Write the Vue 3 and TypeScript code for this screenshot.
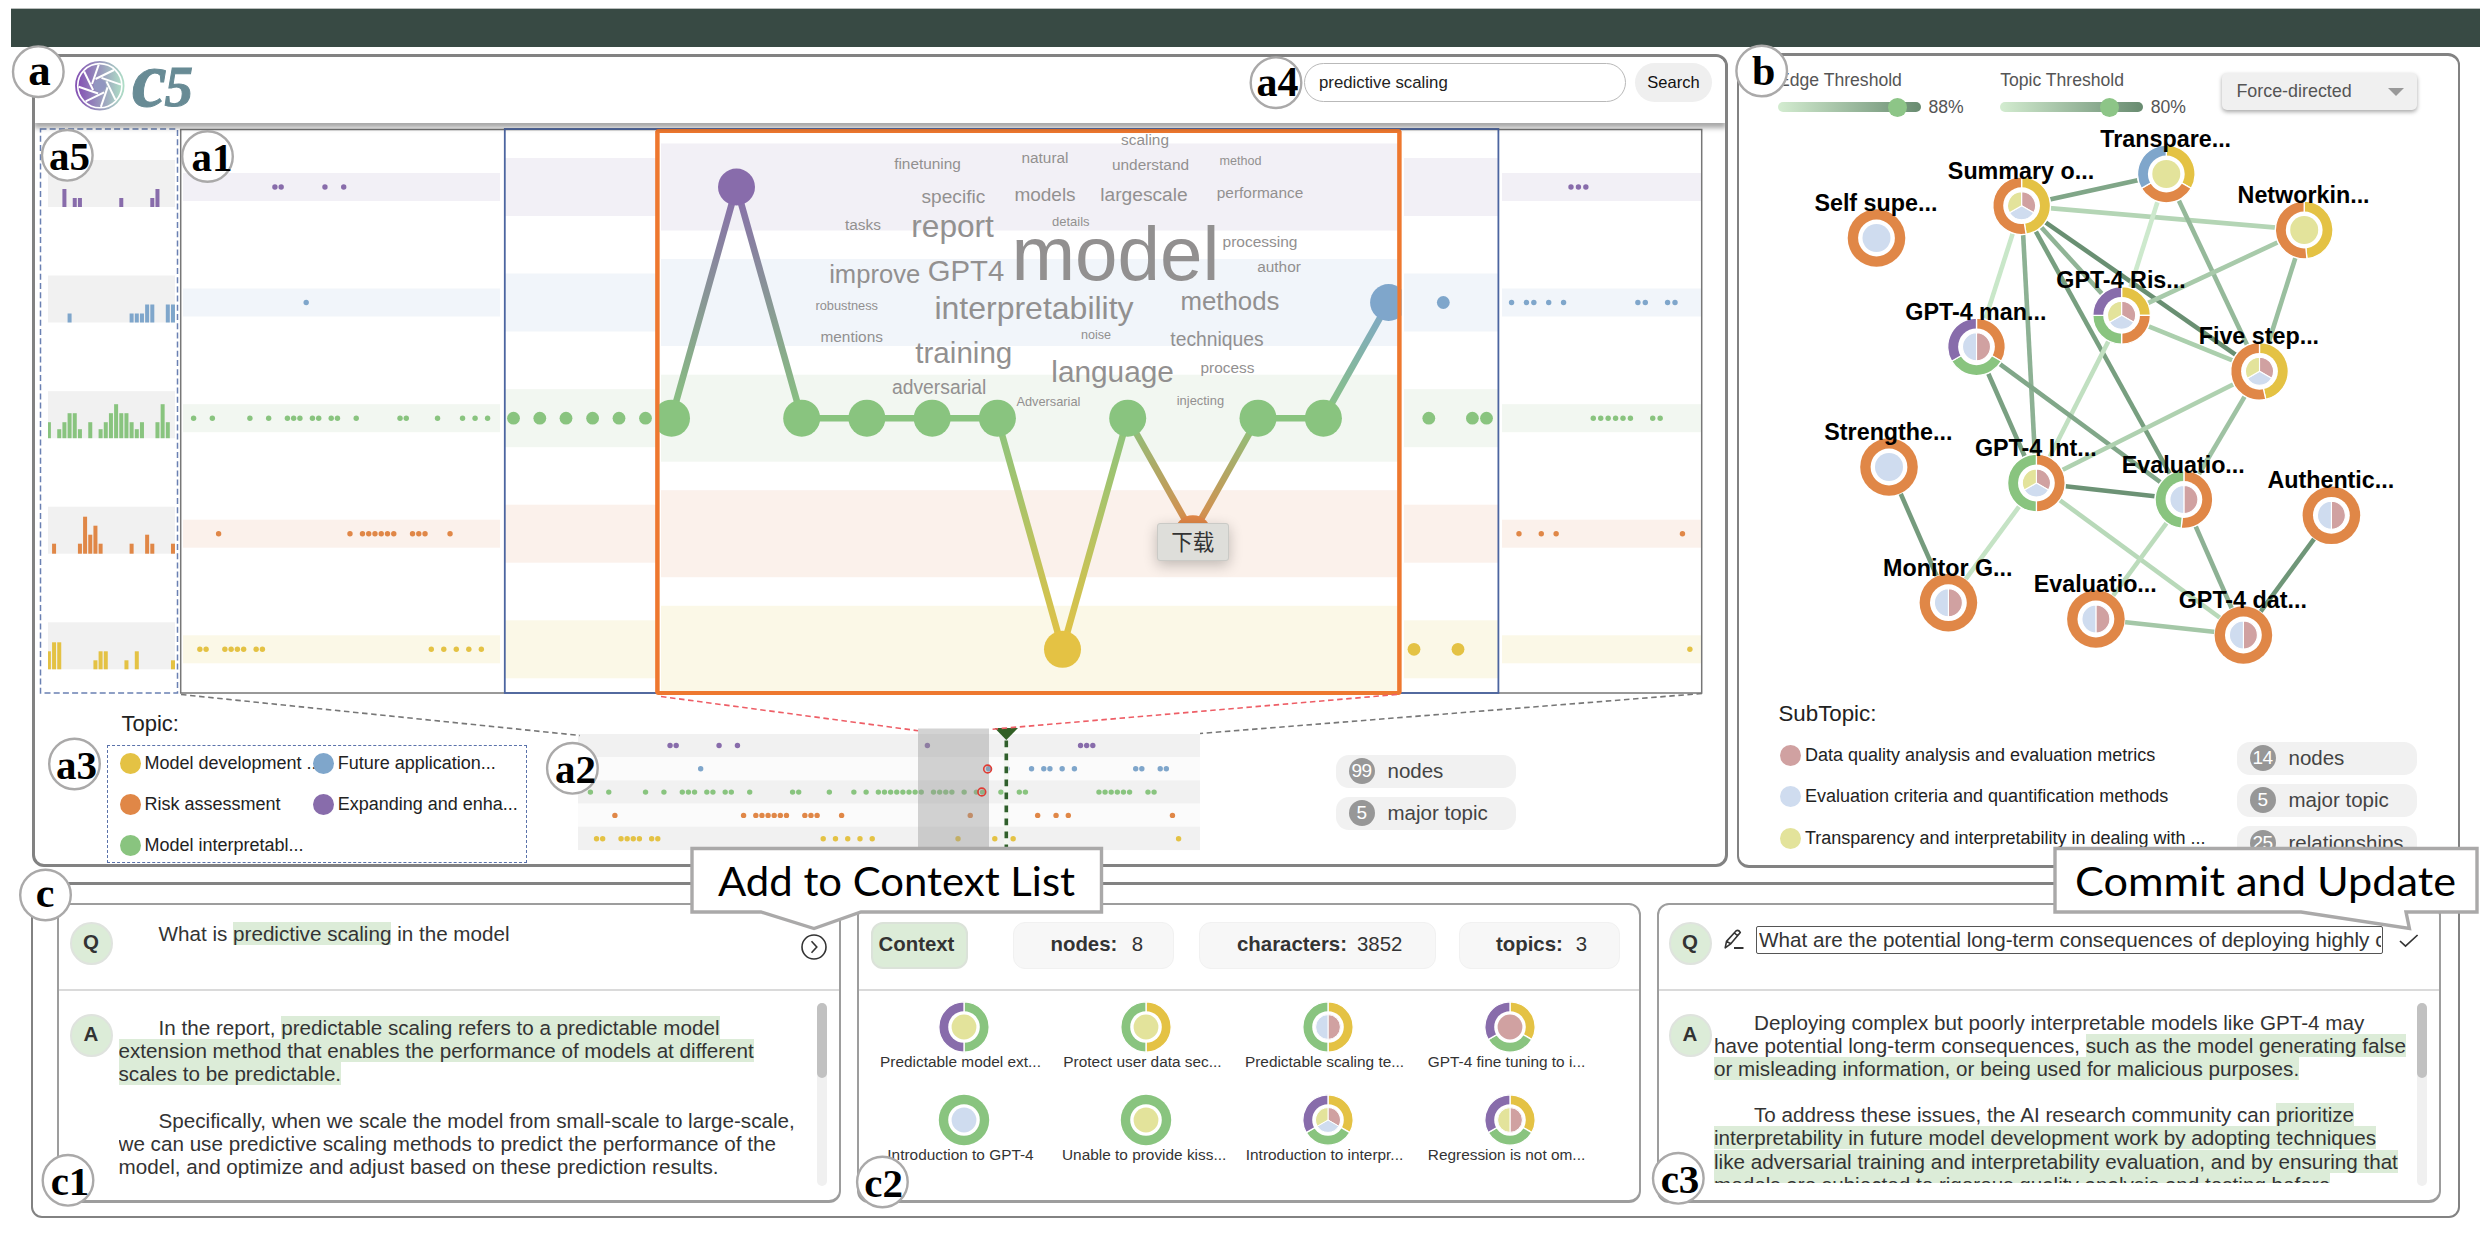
<script setup lang="ts">
type Key = 'P' | 'B' | 'G' | 'O' | 'Y'
const color: Record<Key, string> = { P: '#886cab', B: '#7fa6cb', G: '#89c47f', O: '#e08747', Y: '#e4c244' }
const tint: Record<Key, string> = { P: '#f2f0f6', B: '#f1f5fa', G: '#f2f7f1', O: '#fbf1eb', Y: '#fbf8e7' }
const sub: Record<string, string> = { r: '#d0a1a1', b: '#cfdcef', y: '#e3e39b' }

interface Row { key: Key; y: number; nodes: number[]; bars: [number, number][] }
const rows: Row[] = [
  { key: 'P', y: 187, nodes: [13, 14, 21, 24, 55, 80, 81, 82], bars: [[3, 18], [5, 9], [6, 9], [14, 9], [20, 9], [21, 18]] },
  { key: 'B', y: 302.5, nodes: [18, 65, 68, 72, 74, 75, 77, 79, 89, 90, 93, 94], bars: [[4, 9], [16, 9], [17, 9], [18, 9], [19, 18], [20, 18], [23, 18], [24, 18]] },
  { key: 'G', y: 418.2, nodes: [0, 3, 9, 12, 15, 16, 17, 19, 20, 22, 23, 26, 33, 34, 39, 43, 45, 47, 48, 49, 50, 51, 52, 53, 54, 56, 57, 58, 59, 61, 63, 64, 67, 70, 71, 83, 84, 85, 86, 87, 88, 91, 92], bars: [[0, 16], [2, 9], [3, 16], [4, 25], [5, 25], [6, 9], [8, 16], [10, 9], [11, 16], [12, 25], [13, 34], [14, 25], [15, 25], [16, 16], [17, 9], [18, 16], [21, 16], [22, 34], [23, 16]] },
  { key: 'O', y: 533.7, nodes: [4, 25, 27, 28, 29, 30, 31, 32, 35, 36, 37, 41, 62, 73, 76, 78, 95], bars: [[1, 10], [6, 10], [7, 37], [8, 19], [9, 28], [10, 10], [16, 10], [19, 19], [20, 10], [24, 10]] },
  { key: 'Y', y: 649.3, nodes: [1, 2, 5, 6, 7, 8, 10, 11, 38, 40, 42, 44, 46, 60, 66, 69, 96], bars: [[0, 18], [1, 27], [2, 27], [9, 9], [10, 18], [11, 18], [15, 9], [17, 18], [24, 9]] },
]
const segments = [
  { x: 183, w: 317, h: 28 },
  { x: 505, w: 151, h: 58 },
  { x: 661, w: 737, h: 87 },
  { x: 1404, w: 94, h: 58 },
  { x: 1502, w: 199, h: 28 },
]
const smallDots = rows.flatMap(r => r.nodes.filter(n => n < 48 || n > 71)
  .map(n => ({ x: n < 48 ? 193.6 + 6.255 * n : 1571 + 7.43 * (n - 80), y: r.y, c: color[r.key] })))
const yOf = (k: Key) => rows.find(r => r.key === k)!.y
const mediumDots: [number, Key][] = [[513.5, 'G'], [539.8, 'G'], [566, 'G'], [592.6, 'G'], [619, 'G'], [645.5, 'G'], [1443.3, 'B'], [1428.8, 'G'], [1472.4, 'G'], [1486.5, 'G'], [1414, 'Y'], [1458, 'Y']]
const focus: { x: number; k: Key }[] = ([[671.5, 'G'], [736.5, 'P'], [801.7, 'G'], [866.9, 'G'], [932.2, 'G'], [997.4, 'G'], [1062.5, 'Y'], [1127.7, 'G'], [1192.9, 'O'], [1258, 'G'], [1323.4, 'G'], [1388.6, 'B']] as [number, Key][]).map(([x, k]) => ({ x, k }))
const focusLines = focus.slice(1).map((b, i) => ({ a: focus[i], b }))

const words: [string, number, number, number][] = [
  ['scaling', 1145, 144.7, 15.4], ['finetuning', 927.5, 169.3, 15.4], ['natural', 1045, 163, 15.4], ['understand', 1150.5, 170.3, 15.4],
  ['method', 1240.5, 165.3, 12.6], ['specific', 953.4, 202.7, 19.1], ['models', 1045, 201, 19], ['largescale', 1144, 201, 19.2],
  ['performance', 1260, 198.3, 15.4], ['tasks', 863, 229.7, 15.4], ['report', 952.6, 237.3, 31.6], ['details', 1070.8, 226, 13],
  ['model', 1115.5, 279.7, 76.4], ['processing', 1260, 246.7, 15.5], ['author', 1279, 272.3, 15.4], ['improve', 874.7, 282.7, 25.6],
  ['GPT4', 966, 280.7, 29.3], ['robustness', 846.7, 309.7, 12.8], ['interpretability', 1034, 319, 32], ['methods', 1230, 309.7, 25.8],
  ['mentions', 851.7, 342, 15.4], ['noise', 1096, 339.3, 12.6], ['techniques', 1217, 346.3, 19.3], ['training', 963.8, 363, 29.6],
  ['language', 1112.6, 382, 29.8], ['process', 1227.5, 373.3, 15.4], ['adversarial', 939.2, 394, 19.3], ['Adversarial', 1048.4, 406, 12.8], ['injecting', 1200.4, 405.3, 12.9],
]

// Donut segments as [code, fraction] pairs, drawn clockwise from twelve o'clock.
function ring(parts: [string, number][], r: number) {
  let start = 0
  return parts.map(([code, f]) => {
    const a0 = start * 2 * Math.PI
    start += f
    const a1 = start * 2 * Math.PI
    const p = (a: number) => `${(r * Math.sin(a)).toFixed(2)} ${(-r * Math.cos(a)).toFixed(2)}`
    return { code, d: `M0 0L${p(a0)}A${r} ${r} 0 ${f > 0.5 ? 1 : 0} 1 ${p(a1)}Z` }
  })
}
const even = (codes: string): [string, number][] => codes.split('').map(c => [c, 1 / codes.length])

interface GNode { x: number; y: number; label: string; outer: [string, number][]; inner: string }
const nodes: Record<string, GNode> = {
  self: { x: 1876.5, y: 238, label: 'Self supe...', outer: even('O'), inner: 'b' },
  sum: { x: 2021.6, y: 205.7, label: 'Summary o...', outer: [['Y', 0.475], ['O', 0.525]], inner: 'rby' },
  trans: { x: 2166.3, y: 174, label: 'Transpare...', outer: even('YOB'), inner: 'y' },
  net: { x: 2304.2, y: 230, label: 'Networkin...', outer: [['Y', 0.485], ['O', 0.515]], inner: 'y' },
  ris: { x: 2121.6, y: 315.3, label: 'GPT-4 Ris...', outer: even('YOGP'), inner: 'rby' },
  man: { x: 1976.5, y: 346.8, label: 'GPT-4 man...', outer: even('OGP'), inner: 'rb' },
  five: { x: 2259.5, y: 371.3, label: 'Five step...', outer: [['Y', 0.465], ['O', 0.535]], inner: 'rby' },
  str: { x: 1889, y: 467, label: 'Strengthe...', outer: even('O'), inner: 'b' },
  int: { x: 2036.4, y: 483, label: 'GPT-4 Int...', outer: even('OG'), inner: 'rby' },
  eva: { x: 2183.9, y: 499.5, label: 'Evaluatio...', outer: [['O', 0.515], ['G', 0.485]], inner: 'rb' },
  aut: { x: 2331.4, y: 515.3, label: 'Authentic...', outer: even('O'), inner: 'rb' },
  mon: { x: 1948.4, y: 602.7, label: 'Monitor G...', outer: even('O'), inner: 'rb' },
  ev2: { x: 2095.9, y: 619, label: 'Evaluatio...', outer: even('O'), inner: 'rb' },
  dat: { x: 2243.4, y: 635, label: 'GPT-4 dat...', outer: even('O'), inner: 'rb' },
}
const edges: [string, string, string][] = [
  ['sum', 'trans', '#80a688'], ['sum', 'net', '#b4d5b5'], ['sum', 'man', '#c9e7c9'], ['sum', 'int', '#8db194'], ['sum', 'eva', '#789f80'],
  ['sum', 'ris', '#90b496'], ['sum', 'five', '#698f72'], ['trans', 'ris', '#cde9cd'], ['trans', 'five', '#95b99a'], ['net', 'ris', '#a8caaa'],
  ['net', 'five', '#9abf9f'], ['ris', 'five', '#abcfad'], ['ris', 'int', '#c1e0c1'], ['man', 'int', '#7aa082'], ['man', 'eva', '#81a789'],
  ['five', 'int', '#afd1b0'], ['five', 'eva', '#9fc2a3'], ['int', 'eva', '#6c9275'], ['int', 'mon', '#c5e3c5'], ['int', 'dat', '#b8d9b9'],
  ['eva', 'ev2', '#bcdcbc'], ['eva', 'dat', '#8db194'], ['aut', 'dat', '#6f9678'], ['str', 'mon', '#759b7d'], ['ev2', 'dat', '#a4c7a7'],
]

const topics: { k: Key; t: string }[] = [
  { k: 'Y', t: 'Model development ...' }, { k: 'B', t: 'Future application...' }, { k: 'O', t: 'Risk assessment' },
  { k: 'P', t: 'Expanding and enha...' }, { k: 'G', t: 'Model interpretabl...' },
]
const subtopics = [
  { c: 'r', t: 'Data quality analysis and evaluation metrics' },
  { c: 'b', t: 'Evaluation criteria and quantification methods' },
  { c: 'y', t: 'Transparency and interpretability in dealing with ...' },
]
const context: { t: string; outer: string; inner: string }[] = [
  { t: 'Predictable model ext...', outer: 'GP', inner: 'y' }, { t: 'Protect user data sec...', outer: 'YG', inner: 'y' },
  { t: 'Predictable scaling te...', outer: 'YG', inner: 'rb' }, { t: 'GPT-4 fine tuning to i...', outer: 'YGP', inner: 'r' },
  { t: 'Introduction to GPT-4', outer: 'G', inner: 'b' }, { t: 'Unable to provide kiss...', outer: 'G', inner: 'y' },
  { t: 'Introduction to interpr...', outer: 'YGP', inner: 'rby' }, { t: 'Regression is not om...', outer: 'YGP', inner: 'ry' },
]
type Line = { pad?: boolean; t?: string; m?: string }
const answer1: Line[] = [
  { pad: true, t: 'In the report, ', m: 'predictable scaling refers to a predictable model' },
  { m: 'extension method that enables the performance of models at different' },
  { m: 'scales to be predictable.' },
  {},
  { pad: true, t: 'Specifically, when we scale the model from small-scale to large-scale,' },
  { t: 'we can use predictive scaling methods to predict the performance of the' },
  { t: 'model, and optimize and adjust based on these prediction results.' },
]
const answer2: Line[] = [
  { pad: true, t: 'Deploying complex but poorly interpretable models like GPT-4 may' },
  { t: 'have potential long-term consequences, ', m: 'such as the model generating false' },
  { m: 'or misleading information, or being used for malicious purposes.' },
  {},
  { pad: true, t: 'To address these issues, the AI research community can ', m: 'prioritize' },
  { m: 'interpretability in future model development work by adopting techniques' },
  { m: 'like adversarial training and interpretability evaluation, and by ensuring that' },
  { m: 'models are subjected to rigorous quality analysis and testing before' },
]
const question = 'What are the potential long-term consequences of deploying highly complex models?'
// [label, circle x, circle y, text x, baseline y, size]
const badges: [string, number, number, number, number, number][] = [
  ['a', 38.3, 71.7, 39.5, 85, 45], ['a5', 67.3, 155.3, 69.5, 170, 41], ['a1', 207.5, 156.5, 212, 171, 41], ['a3', 74.5, 764, 76.5, 778.7, 41],
  ['a2', 572.4, 768.3, 575.5, 782.7, 41], ['a4', 1276, 82.7, 1277.5, 96, 42], ['b', 1761.7, 71, 1763.7, 85.3, 42], ['c', 45.5, 895, 45, 907.3, 42],
  ['c1', 68, 1180.3, 70, 1194.7, 41], ['c2', 882.4, 1182, 883.7, 1196.7, 41], ['c3', 1678.3, 1178.3, 1680, 1192.7, 41],
]
const blades = [0, 1, 2, 3, 4, 5, 6, 7]
</script>

<template>
  <div class="page">
    <div class="topbar"></div>
    <div class="upper">
      <section class="panel panel-a">
        <header class="head">
          <svg class="logo" width="165" height="66" viewBox="70 57 165 66">
            <defs>
              <linearGradient id="lens" x1="0" x2="1" y1="0" y2="0">
                <stop offset="0" stop-color="#8452b4" /><stop offset="1" stop-color="#aedcc6" />
              </linearGradient>
            </defs>
            <circle cx="99.8" cy="85.7" r="23.8" fill="none" stroke="url(#lens)" stroke-width="1.8" />
            <circle cx="99.8" cy="85.7" r="21.3" fill="url(#lens)" />
            <line v-for="b in blades" :key="b" x1="95.5" y1="79" x2="114" y2="70" :transform="`rotate(${b * 45} 99.8 85.7)`" stroke="#fff" stroke-width="2" />
            <circle cx="99.8" cy="85.7" r="6.2" fill="#9296c0" />
            <text x="132" y="106" class="brand"><tspan font-size="78">c</tspan><tspan x="164.5" font-size="57">5</tspan></text>
          </svg>
          <div class="search">
            <input class="search-input" value="predictive scaling" />
            <button class="search-btn">Search</button>
          </div>
        </header>

        <svg class="timeline" width="1690" height="576" viewBox="35 123 1690 576">
          <defs>
            <clipPath id="focusclip"><rect x="657" y="130" width="744.5" height="563" /></clipPath>
            <clipPath id="barclip"><rect x="48" y="120" width="127" height="580" /></clipPath>
            <linearGradient v-for="(l, i) in focusLines" :id="'fl' + i" :key="i" gradientUnits="userSpaceOnUse" :x1="l.a.x" :x2="l.b.x" :y1="yOf(l.a.k)" :y2="yOf(l.b.k) + 0.01">
              <stop offset="0" :stop-color="color[l.a.k]" /><stop offset="1" :stop-color="color[l.b.k]" />
            </linearGradient>
          </defs>
          <g v-for="r in rows" :key="r.key">
            <rect x="48" :y="r.y - 27" width="127" height="47" fill="#f1f1f1" />
            <g clip-path="url(#barclip)">
              <rect v-for="b in r.bars" :key="b[0]" :x="46.9 + 5.17 * b[0]" :y="r.y + 20 - b[1]" width="4" :height="b[1]" :fill="color[r.key]" />
            </g>
            <rect v-for="s in segments" :key="s.x" :x="s.x" :y="r.y - s.h / 2" :width="s.w" :height="s.h" :fill="tint[r.key]" />
          </g>
          <circle v-for="(d, i) in smallDots" :key="i" :cx="d.x" :cy="d.y" r="2.7" :fill="d.c" />
          <circle v-for="d in mediumDots" :key="d[0]" :cx="d[0]" :cy="yOf(d[1])" r="6.4" :fill="color[d[1]]" />
          <g class="cloud">
            <text v-for="w in words" :key="w[0]" :x="w[1]" :y="w[2]" :font-size="w[3]">{{ w[0] }}</text>
          </g>
          <rect x="40.5" y="129" width="137" height="564" class="dash" />
          <rect x="180.7" y="129.5" width="1521" height="563.5" fill="none" stroke="#777" stroke-width="1.5" />
          <rect x="504.8" y="129" width="993.6" height="564" fill="none" stroke="#4c65a0" stroke-width="1.8" />
          <g clip-path="url(#focusclip)">
            <line v-for="(l, i) in focusLines" :key="i" :x1="l.a.x" :y1="yOf(l.a.k)" :x2="l.b.x" :y2="yOf(l.b.k) + 0.01" :stroke="`url(#fl${i})`" stroke-width="6.6" />
          </g>
          <rect x="657.4" y="131" width="742" height="562" rx="1" fill="none" stroke="#ee782f" stroke-width="4" />
          <g clip-path="url(#focusclip)">
            <circle v-for="f in focus" :key="f.x" :cx="f.x" :cy="yOf(f.k)" r="18.5" :fill="color[f.k]" />
          </g>
          <path d="M657.4 131V693M1399.4 131V693" stroke="#ee782f" stroke-width="4" />
        </svg>

        <div class="overview">
          <div class="topic">
            <div class="title">Topic:</div>
            <div class="legend">
              <div v-for="t in topics" :key="t.t" class="item"><i :style="{ background: color[t.k] }"></i><span>{{ t.t }}</span></div>
            </div>
          </div>
          <svg class="mini" width="640" height="135" viewBox="578 727 640 135">
            <rect v-for="(r, i) in rows" :key="r.key" x="578" :y="734 + 23.2 * i" width="622" height="23.3" :fill="i % 2 ? '#fbfbfb' : '#f1f1f1'" />
            <g v-for="(r, i) in rows" :key="'d' + r.key">
              <circle v-for="n in r.nodes" :key="n" :cx="590.4 + 6.127 * n" :cy="745.5 + 23.3 * i" r="2.7" :fill="color[r.key]" />
            </g>
            <rect x="918" y="728.5" width="71" height="122" fill="rgba(150,150,150,.42)" />
            <circle cx="987.6" cy="769" r="3.9" class="mark" /><circle cx="981.8" cy="792" r="3.9" class="mark" />
            <path d="M1006.3 740V852" stroke="#f4f8f2" stroke-width="5" />
            <path d="M1006.3 740.5V852" stroke="#2f5f2b" stroke-width="3.6" stroke-dasharray="6.8 6.2" />
            <path d="M994.6 728H1018L1006.3 740Z" fill="#315f25" />
          </svg>
          <div class="pills">
            <div class="pill"><b>99</b>nodes</div>
            <div class="pill"><b>5</b>major topic</div>
          </div>
        </div>
      </section>

      <section class="panel panel-b">
        <div class="controls">
          <div class="ctl"><label>Edge Threshold</label><div class="slide"><div class="track"><i class="thumb t88"></i></div>88%</div></div>
          <div class="ctl"><label>Topic Threshold</label><div class="slide"><div class="track"><i class="thumb t80"></i></div>80%</div></div>
          <div class="select">Force-directed<svg width="16" height="8" viewBox="0 0 16 8"><path d="M0 0H16L8 8Z" fill="#999" /></svg></div>
        </div>
        <svg class="graph" width="719" height="566" viewBox="1739 124 719 566">
          <line v-for="e in edges" :key="e[0] + e[1]" :x1="nodes[e[0]].x" :y1="nodes[e[0]].y" :x2="nodes[e[1]].x" :y2="nodes[e[1]].y" :stroke="e[2]" stroke-width="4.6" />
          <g v-for="n in nodes" :key="n.x" :transform="`translate(${n.x} ${n.y})`">
            <circle r="29.5" fill="#fff" />
            <circle v-if="n.outer.length === 1" r="28.8" :fill="color[n.outer[0][0] as Key]" />
            <template v-else><path v-for="s in ring(n.outer, 28.8)" :key="s.code" :d="s.d" :fill="color[s.code as Key]" stroke="#fff" stroke-width="1.3" /></template>
            <circle r="18.4" fill="#fff" />
            <circle v-if="n.inner.length === 1" r="14" :fill="sub[n.inner]" />
            <template v-else><path v-for="s in ring(even(n.inner), 14)" :key="s.code" :d="s.d" :fill="sub[s.code]" stroke="#fff" stroke-width="1.1" /></template>
          </g>
          <text v-for="n in nodes" :key="n.x" :x="n.x - 0.6" :y="n.y - 27" class="nlabel">{{ n.label }}</text>
        </svg>
        <div class="subrow">
          <div class="subs">
            <div class="title">SubTopic:</div>
            <div v-for="s in subtopics" :key="s.c" class="item"><i :style="{ background: sub[s.c] }"></i><span>{{ s.t }}</span></div>
          </div>
          <div class="pills">
            <div class="pill"><b>14</b>nodes</div>
            <div class="pill"><b>5</b>major topic</div>
            <div class="pill"><b>25</b>relationships</div>
          </div>
        </div>
      </section>
    </div>

    <section class="panel-c">
      <article class="card">
        <div class="card-head">
          <div class="avatar">Q</div>
          <div class="q">What is <mark>predictive scaling</mark> in the model</div>
          <svg class="next" width="26" height="26" viewBox="0 0 26 26" fill="none" stroke="#333" stroke-width="1.6"><circle cx="13" cy="13" r="12" /><path d="M10.5 7.2L15.8 13L10.5 18.8" /></svg>
        </div>
        <div class="card-body">
          <div class="avatar">A</div>
          <div class="text">
            <p v-for="(l, i) in answer1" :key="i" :class="{ pad: l.pad }">{{ l.t }}<mark v-if="l.m">{{ l.m }}</mark></p>
          </div>
          <div class="scroll"><i></i></div>
        </div>
      </article>

      <article class="card">
        <div class="card-head stats">
          <div class="chip ctx">Context</div>
          <div class="chip c-nodes"><b>nodes:</b>8</div>
          <div class="chip c-chars"><b>characters:</b>3852</div>
          <div class="chip c-topics"><b>topics:</b>3</div>
        </div>
        <div class="grid">
          <div v-for="c in context" :key="c.t" class="cell">
            <svg width="52" height="52" viewBox="-26 -26 52 52">
              <circle v-if="c.outer.length === 1" r="25.2" :fill="color[c.outer as Key]" />
              <template v-else><path v-for="s in ring(even(c.outer), 25.2)" :key="s.code" :d="s.d" :fill="color[s.code as Key]" stroke="#fff" stroke-width="1.3" /></template>
              <circle r="15.8" fill="#fff" />
              <circle v-if="c.inner.length === 1" r="12.4" :fill="sub[c.inner]" />
              <template v-else><path v-for="s in ring(even(c.inner), 12.4)" :key="s.code" :d="s.d" :fill="sub[s.code]" stroke="#fff" stroke-width="1" /></template>
            </svg>
            <span>{{ c.t }}</span>
          </div>
        </div>
      </article>

      <article class="card third">
        <div class="card-head">
          <div class="avatar">Q</div>
          <svg class="pencil" width="22" height="22" viewBox="0 0 22 22" fill="none" stroke="#333" stroke-width="1.6" stroke-linejoin="round"><path d="M2.2 18.8L3.5 12.4L13.2 1.8Q15.5 .6 17.3 3.4L8 14.6ZM11.4 4L15.2 7.2M3.5 12.4L7.8 14.8" /><path d="M11 19H20.5" stroke-width="2" /></svg>
          <input class="ask" :value="question" />
          <svg class="check" width="20" height="14" viewBox="0 0 20 14" fill="none" stroke="#333" stroke-width="1.7"><path d="M1 7L6.5 12.2L18.6 1" /></svg>
        </div>
        <div class="card-body">
          <div class="avatar">A</div>
          <div class="text">
            <p v-for="(l, i) in answer2" :key="i" :class="{ pad: l.pad }">{{ l.t }}<mark v-if="l.m">{{ l.m }}</mark></p>
          </div>
          <div class="scroll"><i></i></div>
        </div>
      </article>
    </section>

    <div class="menu-tip">下载</div>

    <svg class="notes" width="2486" height="1234" viewBox="0 0 2486 1234">
      <g fill="none" stroke-width="1.6" stroke-dasharray="5.5 3.6">
        <path d="M181 694.5L580 735.5M1702 693.5L1200 733.5" stroke="#777" />
        <path d="M661 696.5L918 730.7M1397 694.5L989 729.5" stroke="#ee5e66" />
      </g>
      <g fill="#fff" stroke="#aaa9a9" stroke-width="3.4">
        <path d="M692 848.5H1101.5V912H861L814 928.5L761 912H692Z" />
        <path d="M2055 848.5H2477V912H2406L2409.4 928.5L2301 912H2055Z" />
      </g>
      <text x="718" y="896" class="callout" textLength="357" lengthAdjust="spacingAndGlyphs">Add to Context List</text>
      <text x="2075" y="896" class="callout" textLength="381" lengthAdjust="spacingAndGlyphs">Commit and Update</text>
      <g v-for="b in badges" :key="b[0]">
        <circle :cx="b[1]" :cy="b[2]" r="25.3" fill="#fff" stroke="#aaa9a9" stroke-width="2.4" />
        <text :x="b[3]" :y="b[4]" :font-size="b[5]" class="badge">{{ b[0] }}</text>
      </g>
    </svg>
  </div>
</template>

<style>
body { margin: 0; background: #fff; }
</style>

<style scoped>
.page { position: relative; width: 2486px; height: 1234px; overflow: hidden; background: #fff; font-family: "Liberation Sans", Arial, sans-serif; color: #333; display: flex; flex-direction: column; }
.page * { box-sizing: border-box; }
i { display: block; }
.topbar { flex: none; margin: 8px 6px 0 11px; height: 39px; background: #384a44; border-top: 1px solid #b9bdbb; }
.upper { display: flex; gap: 9px; margin: 6px 0 0 32px; height: 815px; flex: none; }
.panel { border: 3px solid #828282; border-radius: 12px; background: #fff; }
.panel-a { width: 1696px; height: 813px; margin-top: 1px; }
.panel-b { width: 723px; height: 815px; border-left-width: 2px; border-right-width: 2px; }

.head { height: 66px; display: flex; align-items: flex-start; justify-content: space-between; padding: 0 13px 0 35px; box-shadow: 0 4px 5px 1px rgba(0, 0, 0, .34); clip-path: inset(0 0 -12px 0); background: #fff; border-radius: 9px 9px 0 0; }
.logo { display: block; overflow: visible; }
.brand { font-family: "Liberation Serif", serif; font-style: italic; font-weight: bold; fill: #688b95; stroke: #688b95; stroke-width: 1; }
.search { display: flex; gap: 9px; padding-top: 6px; }
.search-input { width: 322px; height: 39px; border: 1.5px solid #b9b9b9; border-radius: 20px; padding: 0 0 0 14px; font: 16.8px "Liberation Sans", Arial, sans-serif; color: #222; outline: none; background: #fff; }
.search-btn { width: 77px; height: 39px; border: 0; border-radius: 20px; background: #efefef; font: 16.5px "Liberation Sans", Arial, sans-serif; color: #111; padding: 0; }
.timeline, .mini, .graph { display: block; }
.cloud text { fill: #929090; text-anchor: middle; }
.dash { fill: none; stroke: #6a80b2; stroke-width: 1.5; stroke-dasharray: 6 3.2; }

.overview { display: grid; grid-template-columns: 543px 758px 180px; align-items: start; }
.title { font-size: 22px; line-height: 24px; color: #222; }
.topic .title { margin: 13px 0 9px 86.5px; }
.legend { margin-left: 71.5px; width: 420px; height: 117.5px; border: 1.6px dashed #5a72aa; display: grid; grid-template-columns: 193.3px 193.3px; grid-auto-rows: 34px; row-gap: 7.4px; padding-left: 12.4px; }
.item { display: flex; align-items: center; gap: 3.5px; font-size: 18px; color: #222; white-space: nowrap; }
.item i { width: 21px; height: 21px; border-radius: 50%; flex: none; }
.mini { margin-top: 28px; }
.mark { fill: none; stroke: #e03c34; stroke-width: 1.6; }
.overview .pills { padding-top: 56px; }
.pills { display: flex; flex-direction: column; gap: 9.6px; }
.pill { width: 180px; height: 32.6px; border-radius: 13px; background: #f1f1f1; display: flex; align-items: center; gap: 13px; padding-left: 12.5px; font-size: 20.5px; color: #444; }
.pill b { width: 26px; height: 26px; border-radius: 50%; background: #979797; color: #fff; font-weight: normal; font-size: 19px; line-height: 26px; text-align: center; letter-spacing: -.5px; }

.controls { display: flex; height: 68px; padding: 14px 0 0 39px; font-size: 17.6px; color: #555; }
.ctl { width: 222.2px; line-height: 20px; }
.ctl label { display: block; }
.slide { display: flex; align-items: center; gap: 7.5px; margin-top: 7px; }
.track { position: relative; width: 143px; height: 10px; border-radius: 5px; background: linear-gradient(90deg, #d3ecd0, #688b70); }
.thumb { position: absolute; top: -4.5px; width: 19px; height: 19px; border-radius: 50%; background: #8dc587; }
.t88 { left: 110px; }
.t80 { left: 99.5px; }
.select { width: 195px; height: 37px; margin-top: 3px; border-radius: 5px; background: #f0f0f0; box-shadow: 0 2px 4px rgba(0, 0, 0, .35); display: flex; align-items: center; justify-content: space-between; padding: 0 13px 0 14px; font-size: 17.9px; }
.nlabel { font-weight: bold; font-size: 23.3px; fill: #000; text-anchor: middle; }
.subrow { display: flex; }
.subs { width: 498px; padding: 12px 0 0 39.5px; }
.subs .title { font-size: 22.3px; margin-bottom: 14.5px; }
.subs .item { height: 30px; margin-bottom: 11.4px; gap: 4px; margin-left: 1.5px; }
.subrow .pills { padding-top: 52px; }

.panel-c { flex: none; margin: 14px 0 0 31px; width: 2429px; height: 336px; border: 2.4px solid #828282; border-top-width: 3px; border-radius: 11px; padding: 18px 0 0 24px; display: flex; gap: 16.5px; }
.card { width: 783.5px; height: 299.5px; border: 2px solid #9d9d9d; border-bottom-width: 3px; border-radius: 12px; }
.card-head { height: 86px; border-bottom: 2px solid #dadada; display: flex; align-items: flex-start; padding: 16.5px 11.5px 0 10.5px; }
.avatar { flex: none; width: 43px; height: 43px; border-radius: 50%; background: #dcecd8; border: 2px solid #dfe3de; font-weight: bold; font-size: 20.5px; line-height: 35px; text-align: center; }
.q { margin-left: 6px; padding-left: 40px; font-size: 20.65px; line-height: 23.2px; white-space: nowrap; }
mark { background: #dcecd8; color: inherit; }
.next { margin: 12px 0 0 auto; }
.card-body { display: flex; align-items: flex-start; padding: 12px 11.4px 0 10.5px; }
.card-body .avatar { margin-top: 10.8px; }
.text { width: 690px; margin: 13px 0 0 6px; font-size: 20.65px; line-height: 23.2px; white-space: pre; overflow: hidden; height: 167px; }
.text p { margin: 0; height: 23.2px; }
.text p.pad { padding-left: 40px; }
.scroll { width: 10px; height: 183px; border-radius: 5px; background: #f0f0f0; margin-left: auto; flex: none; }
.scroll i { height: 75px; border-radius: 5px; background: #c1c1c1; }
.third .card-head, .third .card-body { padding-left: 9.5px; }
.third .text { margin: 7.5px 0 0 2.5px; width: 700px; height: 172px; }
.pencil { margin: 7px 0 0 11px; flex: none; }
.ask { margin: 4.5px 0 0 11.5px; width: 627px; height: 28px; border: 1.3px solid #555; border-radius: 2px; padding: 0 1px 0 2px; font: 20.65px "Liberation Sans", Arial, sans-serif; color: #333; outline: none; flex: none; }
.check { margin: 12px 0 0 16px; flex: none; }

.stats { padding: 17px 0 0 12px; }
.chip { height: 47px; border-radius: 12px; background: #f7f7f7; border: 1px solid #f1f1f1; font-size: 20.4px; line-height: 43px; display: flex; flex: none; }
.ctx { width: 97px; background: #dcecd8; border: 2px solid #dbe2d9; font-weight: bold; line-height: 40px; padding-left: 5.5px; margin-right: 45px; }
.c-nodes { width: 161px; padding-left: 36.5px; gap: 14.5px; margin-right: 24.5px; }
.c-chars { width: 237px; padding-left: 37.5px; gap: 10px; margin-right: 23.5px; }
.c-topics { width: 161px; padding-left: 36px; gap: 13px; }
.grid { display: grid; grid-template-columns: repeat(4, 182px); grid-auto-rows: 93px; padding: 9.5px 0 0 21px; }
.cell { display: flex; flex-direction: column; align-items: center; width: 182px; padding-right: 14px; }
.cell span { font-size: 15.4px; line-height: 18px; white-space: nowrap; width: 100%; text-align: center; padding-right: 7px; }

.menu-tip { position: absolute; left: 1157px; top: 523px; width: 71.5px; height: 37.5px; border-radius: 3px; background: #dededa; border: 1px solid #cacac6; box-shadow: 0 4px 14px rgba(0, 0, 0, .24); font: 21.5px/34px "Noto Sans CJK SC", sans-serif; text-align: center; color: #333; }
.notes { position: absolute; left: 0; top: 0; }
.callout { font-family: Lato, "Noto Sans", sans-serif; font-size: 41px; fill: #000; }
.badge { font-family: "Liberation Serif", serif; font-weight: bold; text-anchor: middle; fill: #000; }
</style>
